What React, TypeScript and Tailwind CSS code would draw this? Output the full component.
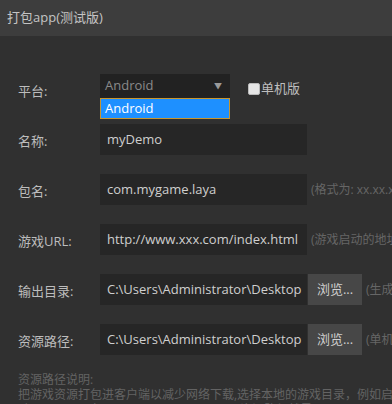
import React from "react";

const font = { fontFamily: '"Open Sans", "Noto Sans CJK SC", sans-serif' };

function Row({ label, value, hint, browse }: { label: string; value: string; hint?: string; browse?: boolean }) {
  return (
    <div className="flex h-[31px] items-center">
      <div className="w-[82px] shrink-0 pt-[5px] text-[13px] text-[#bdbdbd]">{label}</div>
      <div className="flex h-[31px] w-[207px] shrink-0 items-center overflow-hidden whitespace-nowrap bg-[#262626] pl-[7px] text-[13px] text-[#cfcfcf]">
        {value}
      </div>
      {browse && (
        <div className="ml-px flex h-[31px] w-[54px] shrink-0 items-center justify-center bg-[#474747] text-[13px] text-[#cfcfcf]">浏览...</div>
      )}
      {hint && <div className="ml-[4px] whitespace-nowrap text-[12px] text-[#666]">{hint}</div>}
    </div>
  );
}

export default function App() {
  return (
    <div className="h-[404px] w-[392px] overflow-hidden bg-[#303030]" style={font}>
      <div className="flex h-[36px] items-center bg-[#3d3d3d] pl-[7px] text-[13px] text-[#c4c4c4]">打包app(测试版)</div>
      <div className="pl-[18px] pt-[38px]">
        <div className="flex h-[24px] items-center">
          <div className="w-[82px] shrink-0 pt-[12px] text-[13px] text-[#bdbdbd]">平台:</div>
          <div className="relative h-[24px] w-[130px] shrink-0">
            <div className="flex h-[24px] items-center justify-between bg-[#222] pl-[5px] pr-[8px] text-[13px] text-[#8a8a8a]">
              <span>Android</span>
              <span className="text-[8px] text-[#9a9a9a]">▼</span>
            </div>
            <div className="absolute left-0 top-[24px] flex h-[21px] w-[130px] items-center border border-[#c8962e] bg-[#1e90ff] pl-[4px] text-[13px] text-white">
              Android
            </div>
          </div>
          <div className="ml-[18px] flex items-center self-start pt-[5px]">
            <span className="h-[12px] w-[12px] rounded-[2px] border border-[#bbb] bg-[#e6e6e6]" />
            <span className="ml-px text-[13px] text-[#bdbdbd]">单机版</span>
          </div>
        </div>
        <div className="mt-[26px] flex flex-col gap-[19px]">
          <Row label="名称:" value="myDemo" />
          <Row label="包名:" value="com.mygame.laya" hint="(格式为: xx.xx.xx" />
          <Row label="游戏URL:" value="http://www.xxx.com/index.html" hint="(游戏启动的地址" />
          <Row label="输出目录:" value="C:\Users\Administrator\Desktop" hint="(生成" browse />
          <Row label="资源路径:" value="C:\Users\Administrator\Desktop" hint="(单机" browse />
        </div>
        <div className="mt-[17px] whitespace-nowrap text-[12px] leading-[15px] text-[#636363]">
          <div>资源路径说明:</div>
          <div>把游戏资源打包进客户端以减少网络下载,选择本地的游戏目录，例如启</div>
          <div>动index.html在D:/game/index.html下,那资源路径就是D:/game/</div>
        </div>
      </div>
    </div>
  );
}
